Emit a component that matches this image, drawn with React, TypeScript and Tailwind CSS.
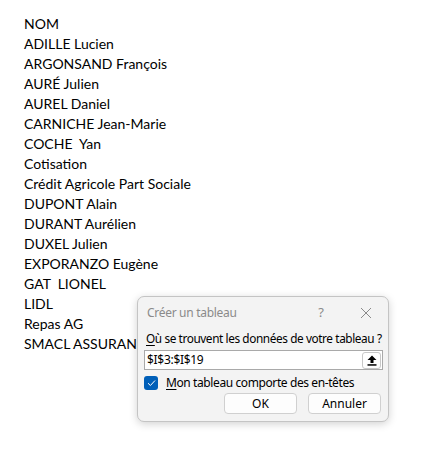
import React from "react";

const names = [
  "NOM",
  "ADILLE Lucien",
  "ARGONSAND François",
  "AURÉ Julien",
  "AUREL Daniel",
  "CARNICHE Jean-Marie",
  "COCHE  Yan",
  "Cotisation",
  "Crédit Agricole Part Sociale",
  "DUPONT Alain",
  "DURANT Aurélien",
  "DUXEL Julien",
  "EXPORANZO Eugène",
  "GAT  LIONEL",
  "LIDL",
  "Repas AG",
  "SMACL ASSURANCES",
];

export default function App() {
  return (
    <div className="relative w-[446px] h-[464px] bg-white overflow-hidden">
      <div className="pt-[14px] pl-[24px] flex flex-col" style={{ fontFamily: "Lato, 'Liberation Sans', sans-serif" }}>
        {names.map((n, i) => (
          <div key={i} className="h-[20px] leading-[20px] text-[14px] text-black whitespace-pre">
            {n}
          </div>
        ))}
      </div>

      <div
        className="absolute left-[137px] top-[296px] w-[252px] h-[126px] bg-[#f3f3f3] border border-[#c4c4c4] rounded-[7px] shadow-[0_2px_8px_rgba(0,0,0,0.18)] flex flex-col text-[12px] text-black"
        style={{ fontFamily: "'Noto Sans', 'Open Sans', sans-serif" }}
      >
        <div className="h-[31px] flex items-center pl-[9px] pr-[14px]">
          <span className="text-[#8a8a8a] text-[12px] tracking-[-0.3px] flex-1">Créer un tableau</span>
          <span className="text-[#8a8a8a] text-[13px] w-[14px] text-center mr-[32px]">?</span>
          <svg width="12" height="12" viewBox="0 0 12 12" className="mr-[2px]">
            <path d="M1 1 L11 11 M11 1 L1 11" stroke="#8a8a8a" strokeWidth="1" fill="none" />
          </svg>
        </div>
        <div className="px-[6px] flex flex-col">
          <div className="h-[18px] leading-[18px] pl-[2px] mt-[1px] whitespace-nowrap text-[11.8px] tracking-[-0.4px] first-letter:underline first-letter:underline-offset-2">
            Où se trouvent les données de votre tableau ?
          </div>
          <div className="mt-[3px] h-[20px] w-[239px] bg-white border border-[#a9a9a9] flex items-center">
            <span className="pl-[2px] flex-1 text-[12px] tracking-[-0.3px]">$I$3:$I$19</span>
            <div className="w-[19px] h-[17px] mr-[1px] border border-[#c8c8c8] rounded-[3px] bg-white flex items-center justify-center">
              <svg width="10" height="11" viewBox="0 0 10 11">
                <path d="M5 0.5 L9.5 5 L6.5 5 L6.5 8 L3.5 8 L3.5 5 L0.5 5 Z" fill="#000" />
                <rect x="0.5" y="9.2" width="9" height="1.5" fill="#000" />
              </svg>
            </div>
          </div>
          <div className="mt-[6px] flex items-center h-[14px]">
            <div className="w-[14px] h-[14px] rounded-[3px] bg-[#005fb8] flex items-center justify-center">
              <svg width="9" height="8" viewBox="0 0 9 8">
                <path d="M1 4.2 L3.4 6.5 L8 1.5" stroke="#fff" strokeWidth="1" fill="none" />
              </svg>
            </div>
            <div className="ml-[8px] whitespace-nowrap tracking-[-0.4px] first-letter:underline first-letter:underline-offset-2">
              Mon tableau comporte des en-têtes
            </div>
          </div>
          <div className="mt-[3px] flex justify-end gap-[11px] pr-[1px]">
            <div className="w-[73px] h-[21px] bg-[#fdfdfd] border border-[#d0d0d0] rounded-[4px] flex items-center justify-center">
              OK
            </div>
            <div className="w-[73px] h-[21px] bg-[#fdfdfd] border border-[#d0d0d0] rounded-[4px] flex items-center justify-center">
              Annuler
            </div>
          </div>
        </div>
      </div>
    </div>
  );
}
